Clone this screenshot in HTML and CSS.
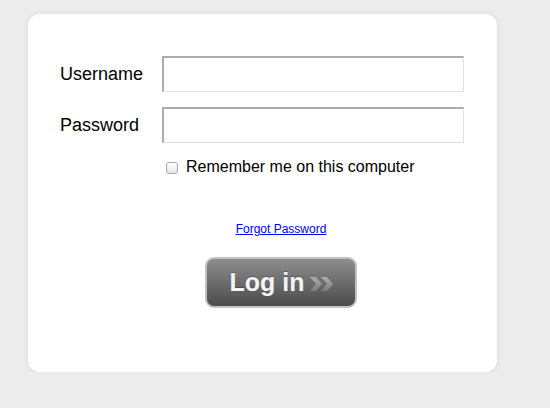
FILE: index.html
```html
<!DOCTYPE html>
<html lang="en">
<head>
    <meta charset="UTF-8">
    <title>Log in</title>
    <link rel="stylesheet" href="styles.css">
</head>
<body>
    <div class="login-box">
        <form class="login-form">
            <div class="field-row">
                <label for="username">Username</label>
                <input type="text" id="username" name="username">
            </div>
            <div class="field-row">
                <label for="password">Password</label>
                <input type="password" id="password" name="password">
            </div>
            <div class="remember-row">
                <input type="checkbox" id="remember" name="remember">
                <label for="remember">Remember me on this computer</label>
            </div>
            <div class="actions">
                <a href="#" class="forgot">Forgot Password</a>
                <button type="button" class="login-btn">
                    <span>Log in</span>
                    <svg width="24" height="14" viewBox="0 0 24 14">
                        <defs>
                            <linearGradient id="chev" x1="0" y1="0" x2="0" y2="1">
                                <stop offset="0" stop-color="#acacac"/>
                                <stop offset="1" stop-color="#7c7c7c"/>
                            </linearGradient>
                        </defs>
                        <polygon points="0,0 6,0 12,7 6,14 0,14 6,7" fill="url(#chev)"/>
                        <polygon points="11,0 17,0 23,7 17,14 11,14 17,7" fill="url(#chev)"/>
                    </svg>
                </button>
            </div>
        </form>
    </div>
</body>
</html>
```

FILE: styles.css
```css
body {
    margin: 0;
    padding: 0;
    background: #ececec;
    font-family: "Liberation Sans", Arial, sans-serif;
    color: #000;
}

.login-box {
    margin: 14px 0 0 28px;
    width: 469px;
    height: 358px;
    box-sizing: border-box;
    padding: 42px 33px 0 32px;
    background: #fff;
    border-radius: 12px;
    box-shadow: 0 1px 6px rgba(0, 0, 0, 0.08);
}

.field-row {
    display: grid;
    grid-template-columns: 102px 302px;
    align-items: center;
    margin-bottom: 15px;
}

.field-row label {
    font-size: 18px;
    padding-top: 1px;
}

.field-row input {
    box-sizing: border-box;
    width: 302px;
    height: 36px;
    margin: 0;
    border-style: solid;
    border-width: 2px 1px 1px 2px;
    border-color: #adadad #e2e2e2 #e2e2e2 #adadad;
    background: #fff;
    font-size: 16px;
    padding: 0 6px;
}

.remember-row {
    display: flex;
    align-items: center;
    margin: 2px 0 0 106px;
    font-size: 16px;
}

.remember-row input {
    appearance: none;
    width: 12px;
    height: 12px;
    margin: 2px 8px 0 0;
    border: 1px solid #a9a9a9;
    border-radius: 3px;
    background: linear-gradient(#fff, #e8e8e8);
}

.actions {
    display: flex;
    flex-direction: column;
    align-items: center;
    padding-left: 38px;
    margin-top: 46px;
}

.forgot {
    font-size: 12px;
    color: #0000ee;
    text-decoration: underline;
}

.login-btn {
    display: flex;
    align-items: center;
    justify-content: center;
    gap: 6px;
    margin-top: 21px;
    width: 152px;
    height: 51px;
    padding: 0 0 0 2px;
    border: 2px solid #c2c2c2;
    border-radius: 9px;
    background: linear-gradient(#8e8e8e, #4b4b4b);
    color: #f4f4f4;
    font-family: "Liberation Sans", Arial, sans-serif;
    font-weight: bold;
    font-size: 25px;
    cursor: pointer;
}

.login-btn span {
    text-shadow: 0 -1px 0 rgba(0, 0, 0, 0.25);
}

.login-btn svg {
    margin-top: 3px;
}
```
